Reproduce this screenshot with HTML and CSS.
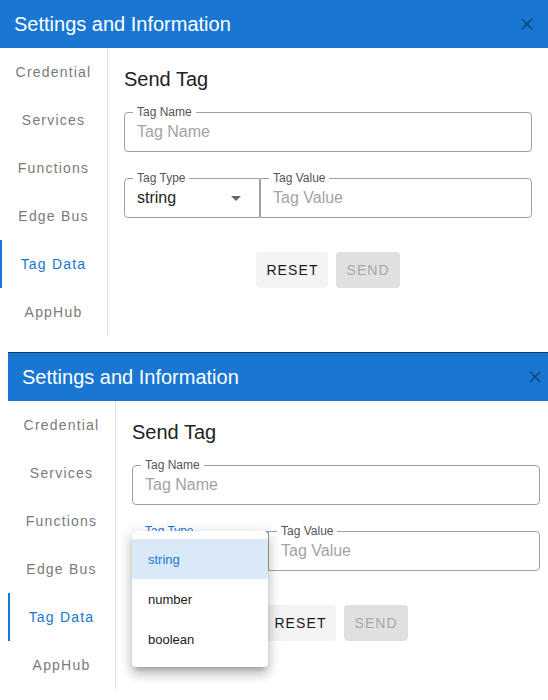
FILE: index.html
```html
<!DOCTYPE html>
<html lang="en">

<head>
    <meta charset="UTF-8">
    <meta name="viewport" content="width=device-width, initial-scale=1.0">
    <title>Settings and Information</title>
    <link rel="stylesheet" href="styles.css">
</head>

<body>
    <!-- closed state -->
    <div class="dialog">
        <div class="dialog-title">
            <span>Settings and Information</span>
            <svg class="close" viewBox="0 0 24 24"><path d="M19 6.41 17.59 5 12 10.59 6.41 5 5 6.41 10.59 12 5 17.59 6.41 19 12 13.41 17.59 19 19 17.59 13.41 12z"/></svg>
        </div>
        <div class="dialog-body">
            <div class="tabs">
                <div class="tab">Credential</div>
                <div class="tab">Services</div>
                <div class="tab">Functions</div>
                <div class="tab">Edge Bus</div>
                <div class="tab active">Tag Data</div>
                <div class="tab">AppHub</div>
            </div>
            <div class="panel">
                <h2>Send Tag</h2>
                <div class="field">
                    <span class="field-label">Tag Name</span>
                    <input type="text" placeholder="Tag Name">
                </div>
                <div class="field-row">
                    <div class="field select">
                        <span class="field-label">Tag Type</span>
                        <div class="select-value">string</div>
                        <span class="arrow"></span>
                    </div>
                    <div class="field value">
                        <span class="field-label">Tag Value</span>
                        <input type="text" placeholder="Tag Value">
                    </div>
                </div>
                <div class="actions">
                    <button class="btn">Reset</button>
                    <button class="btn disabled">Send</button>
                </div>
            </div>
        </div>
    </div>

    <!-- type menu open -->
    <div class="dialog second">
        <div class="dialog-title">
            <span>Settings and Information</span>
            <svg class="close" viewBox="0 0 24 24"><path d="M19 6.41 17.59 5 12 10.59 6.41 5 5 6.41 10.59 12 5 17.59 6.41 19 12 13.41 17.59 19 19 17.59 13.41 12z"/></svg>
        </div>
        <div class="dialog-body">
            <div class="tabs">
                <div class="tab">Credential</div>
                <div class="tab">Services</div>
                <div class="tab">Functions</div>
                <div class="tab">Edge Bus</div>
                <div class="tab active">Tag Data</div>
                <div class="tab">AppHub</div>
            </div>
            <div class="panel">
                <h2>Send Tag</h2>
                <div class="field">
                    <span class="field-label">Tag Name</span>
                    <input type="text" placeholder="Tag Name">
                </div>
                <div class="field-row">
                    <div class="field select focused">
                        <span class="field-label">Tag Type</span>
                        <div class="select-value">string</div>
                        <span class="arrow"></span>
                        <ul class="menu">
                            <li class="selected">string</li>
                            <li>number</li>
                            <li>boolean</li>
                        </ul>
                    </div>
                    <div class="field value">
                        <span class="field-label">Tag Value</span>
                        <input type="text" placeholder="Tag Value">
                    </div>
                </div>
                <div class="actions">
                    <button class="btn">Reset</button>
                    <button class="btn disabled">Send</button>
                </div>
            </div>
        </div>
    </div>
</body>

</html>
```

FILE: styles.css
```css
html,
body {
    overflow: hidden;
}

body {
    margin: 0;
    padding: 0;
    background: #fff;
    font-family: "Liberation Sans", Arial, sans-serif;
    color: rgba(0, 0, 0, .87);
}

.dialog {
    width: 548px;
    background: #fff;
}

.dialog.second {
    margin: 16px 0 0 8px;
    border-top: 1px solid #123d68;
}

.dialog-title {
    height: 48px;
    padding: 0 11px 0 14px;
    box-sizing: border-box;
    display: flex;
    align-items: center;
    justify-content: space-between;
    background: #1976d2;
    color: #fff;
    font-size: 20px;
}

.close {
    width: 20px;
    height: 20px;
    fill: rgba(0, 0, 0, .35);
}

.dialog-body {
    display: flex;
}

.tabs {
    width: 107px;
    border-right: 1px solid #e0e0e0;
}

.tab {
    height: 48px;
    display: flex;
    align-items: center;
    justify-content: center;
    font-size: 14px;
    letter-spacing: 1.2px;
    color: #7a7a7a;
}

.tab.active {
    color: #1976d2;
    box-shadow: inset 2px 0 0 #1976d2;
}

.panel {
    flex: 1;
    padding: 19px 16px 0;
}

.panel h2 {
    margin: 0 0 21px;
    font-size: 20px;
    font-weight: 400;
    line-height: 24px;
    color: #222;
}

.field {
    position: relative;
    height: 40px;
    box-sizing: border-box;
    border: 1px solid #a0a0a0;
    border-radius: 4px;
    display: flex;
    align-items: center;
}

.field-label {
    position: absolute;
    top: -8px;
    left: 8px;
    padding: 0 4px;
    background: #fff;
    font-size: 12px;
    line-height: 14px;
    color: #555;
}

.field input {
    width: 100%;
    border: 0;
    outline: 0;
    padding: 0 12px;
    font-family: inherit;
    font-size: 16px;
    color: #222;
    background: transparent;
}

.field input::placeholder {
    color: #a3a3a3;
}

.field-row {
    display: flex;
    margin-top: 26px;
}

.field.select {
    width: 136px;
    flex: none;
    border-radius: 4px 0 0 4px;
}

.field.select.focused {
    border-color: #1976d2;
}

.field.select.focused .field-label {
    color: #1976d2;
}

.field.value {
    flex: 1;
    border-radius: 0 4px 4px 0;
}

.select-value {
    flex: 1;
    padding: 0 12px;
    font-size: 16px;
    color: #222;
}

.arrow {
    width: 0;
    height: 0;
    margin-right: 18px;
    border-left: 5px solid transparent;
    border-right: 5px solid transparent;
    border-top: 5px solid #666;
}

/* open list of tag types */
.menu {
    position: absolute;
    top: -1px;
    left: -1px;
    z-index: 2;
    width: 136px;
    margin: 0;
    padding: 8px 0;
    list-style: none;
    background: #fff;
    border-radius: 4px;
    box-shadow: 0 5px 5px -3px rgba(0, 0, 0, .2),
        0 8px 10px 1px rgba(0, 0, 0, .14),
        0 3px 14px 2px rgba(0, 0, 0, .12);
}

.menu li {
    height: 40px;
    padding: 0 16px;
    display: flex;
    align-items: center;
    font-size: 13px;
    color: #222;
}

.menu li.selected {
    background: rgba(25, 118, 210, .16);
    color: #1976d2;
}

.actions {
    display: flex;
    justify-content: center;
    gap: 8px;
    margin-top: 34px;
    padding-bottom: 48px;
}

.btn {
    height: 36px;
    min-width: 64px;
    padding: 0 9px 0 10px;
    border: 0;
    border-radius: 4px;
    background: #f3f3f3;
    font-family: inherit;
    font-size: 14px;
    letter-spacing: 1.1px;
    text-transform: uppercase;
    color: #1a1a1a;
}

.btn.disabled {
    background: #e0e0e0;
    color: #a8a8a8;
}
```
